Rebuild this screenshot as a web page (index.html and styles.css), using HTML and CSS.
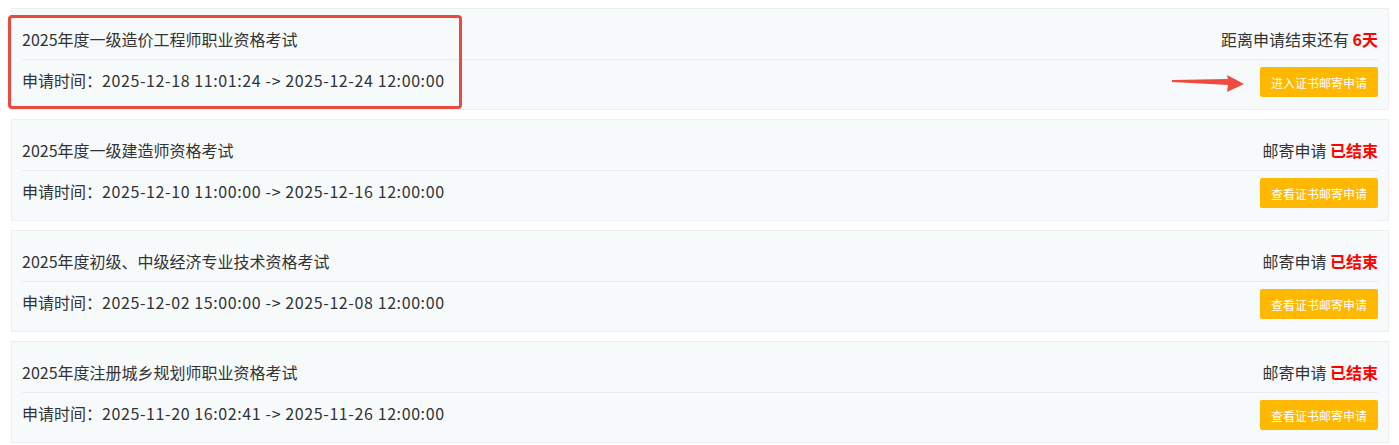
FILE: index.html
```html
<!DOCTYPE html>
<html lang="zh-CN">
<head>
<meta charset="utf-8">
<title>证书邮寄申请</title>
<link rel="stylesheet" href="styles.css">
</head>
<body>
<div class="list">
  <div class="card">
    <div class="row head">
      <span class="title">2025年度一级造价工程师职业资格考试</span>
      <span class="status">距离申请结束还有 <b class="red">6天</b></span>
    </div>
    <div class="row">
      <span class="time">申请时间：<span class="date">2025-12-18 11:01:24 -&gt; 2025-12-24 12:00:00</span></span>
      <a class="btn">进入证书邮寄申请</a>
    </div>
    <div class="highlight"></div>
    <svg class="arrow" width="76" height="22" viewBox="0 0 76 22"><polygon points="1,7 57,6 56,2 73,11 56,19 57,12 1,9" fill="#ee4b3e"/></svg>
  </div>
  <div class="card">
    <div class="row head">
      <span class="title">2025年度一级建造师资格考试</span>
      <span class="status">邮寄申请 <b class="red">已结束</b></span>
    </div>
    <div class="row">
      <span class="time">申请时间：<span class="date">2025-12-10 11:00:00 -&gt; 2025-12-16 12:00:00</span></span>
      <a class="btn">查看证书邮寄申请</a>
    </div>
  </div>
  <div class="card">
    <div class="row head">
      <span class="title">2025年度初级、中级经济专业技术资格考试</span>
      <span class="status">邮寄申请 <b class="red">已结束</b></span>
    </div>
    <div class="row">
      <span class="time">申请时间：<span class="date">2025-12-02 15:00:00 -&gt; 2025-12-08 12:00:00</span></span>
      <a class="btn">查看证书邮寄申请</a>
    </div>
  </div>
  <div class="card">
    <div class="row head">
      <span class="title">2025年度注册城乡规划师职业资格考试</span>
      <span class="status">邮寄申请 <b class="red">已结束</b></span>
    </div>
    <div class="row">
      <span class="time">申请时间：<span class="date">2025-11-20 16:02:41 -&gt; 2025-11-26 12:00:00</span></span>
      <a class="btn">查看证书邮寄申请</a>
    </div>
  </div>
</div>
</body>
</html>
```
FILE: styles.css
```css
html, body {
  margin: 0;
  padding: 0;
  background: #ffffff;
}
body {
  font-family: "Noto Sans CJK SC", "Noto Sans", sans-serif;
  color: #333333;
  font-size: 16px;
}
.list {
  padding: 8px 10px 0 11px;
}
.card {
  position: relative;
  background: #f7fafb;
  border: 1px solid #eceef0;
  padding: 10px 10px 9px;
  margin-bottom: 9px;
}
.row {
  height: 40px;
  display: flex;
  align-items: center;
  justify-content: space-between;
}
.head {
  border-bottom: 1px solid #e8ecee;
}
.date {
  letter-spacing: 0.6px;
}
.red {
  color: #ff0000;
  font-weight: bold;
  font-size: 16px;
}
.btn {
  display: inline-flex;
  align-items: center;
  height: 30px;
  padding: 0 11px;
  margin-top: 4px;
  background: #ffb800;
  color: #ffffff;
  font-size: 12px;
  border-radius: 2px;
}
.highlight {
  position: absolute;
  left: -4px;
  top: 6px;
  width: 448px;
  height: 88px;
  border: 3px solid #e84a3f;
  border-radius: 4px;
}
.arrow {
  position: absolute;
  left: 1159px;
  top: 64px;
}
```
